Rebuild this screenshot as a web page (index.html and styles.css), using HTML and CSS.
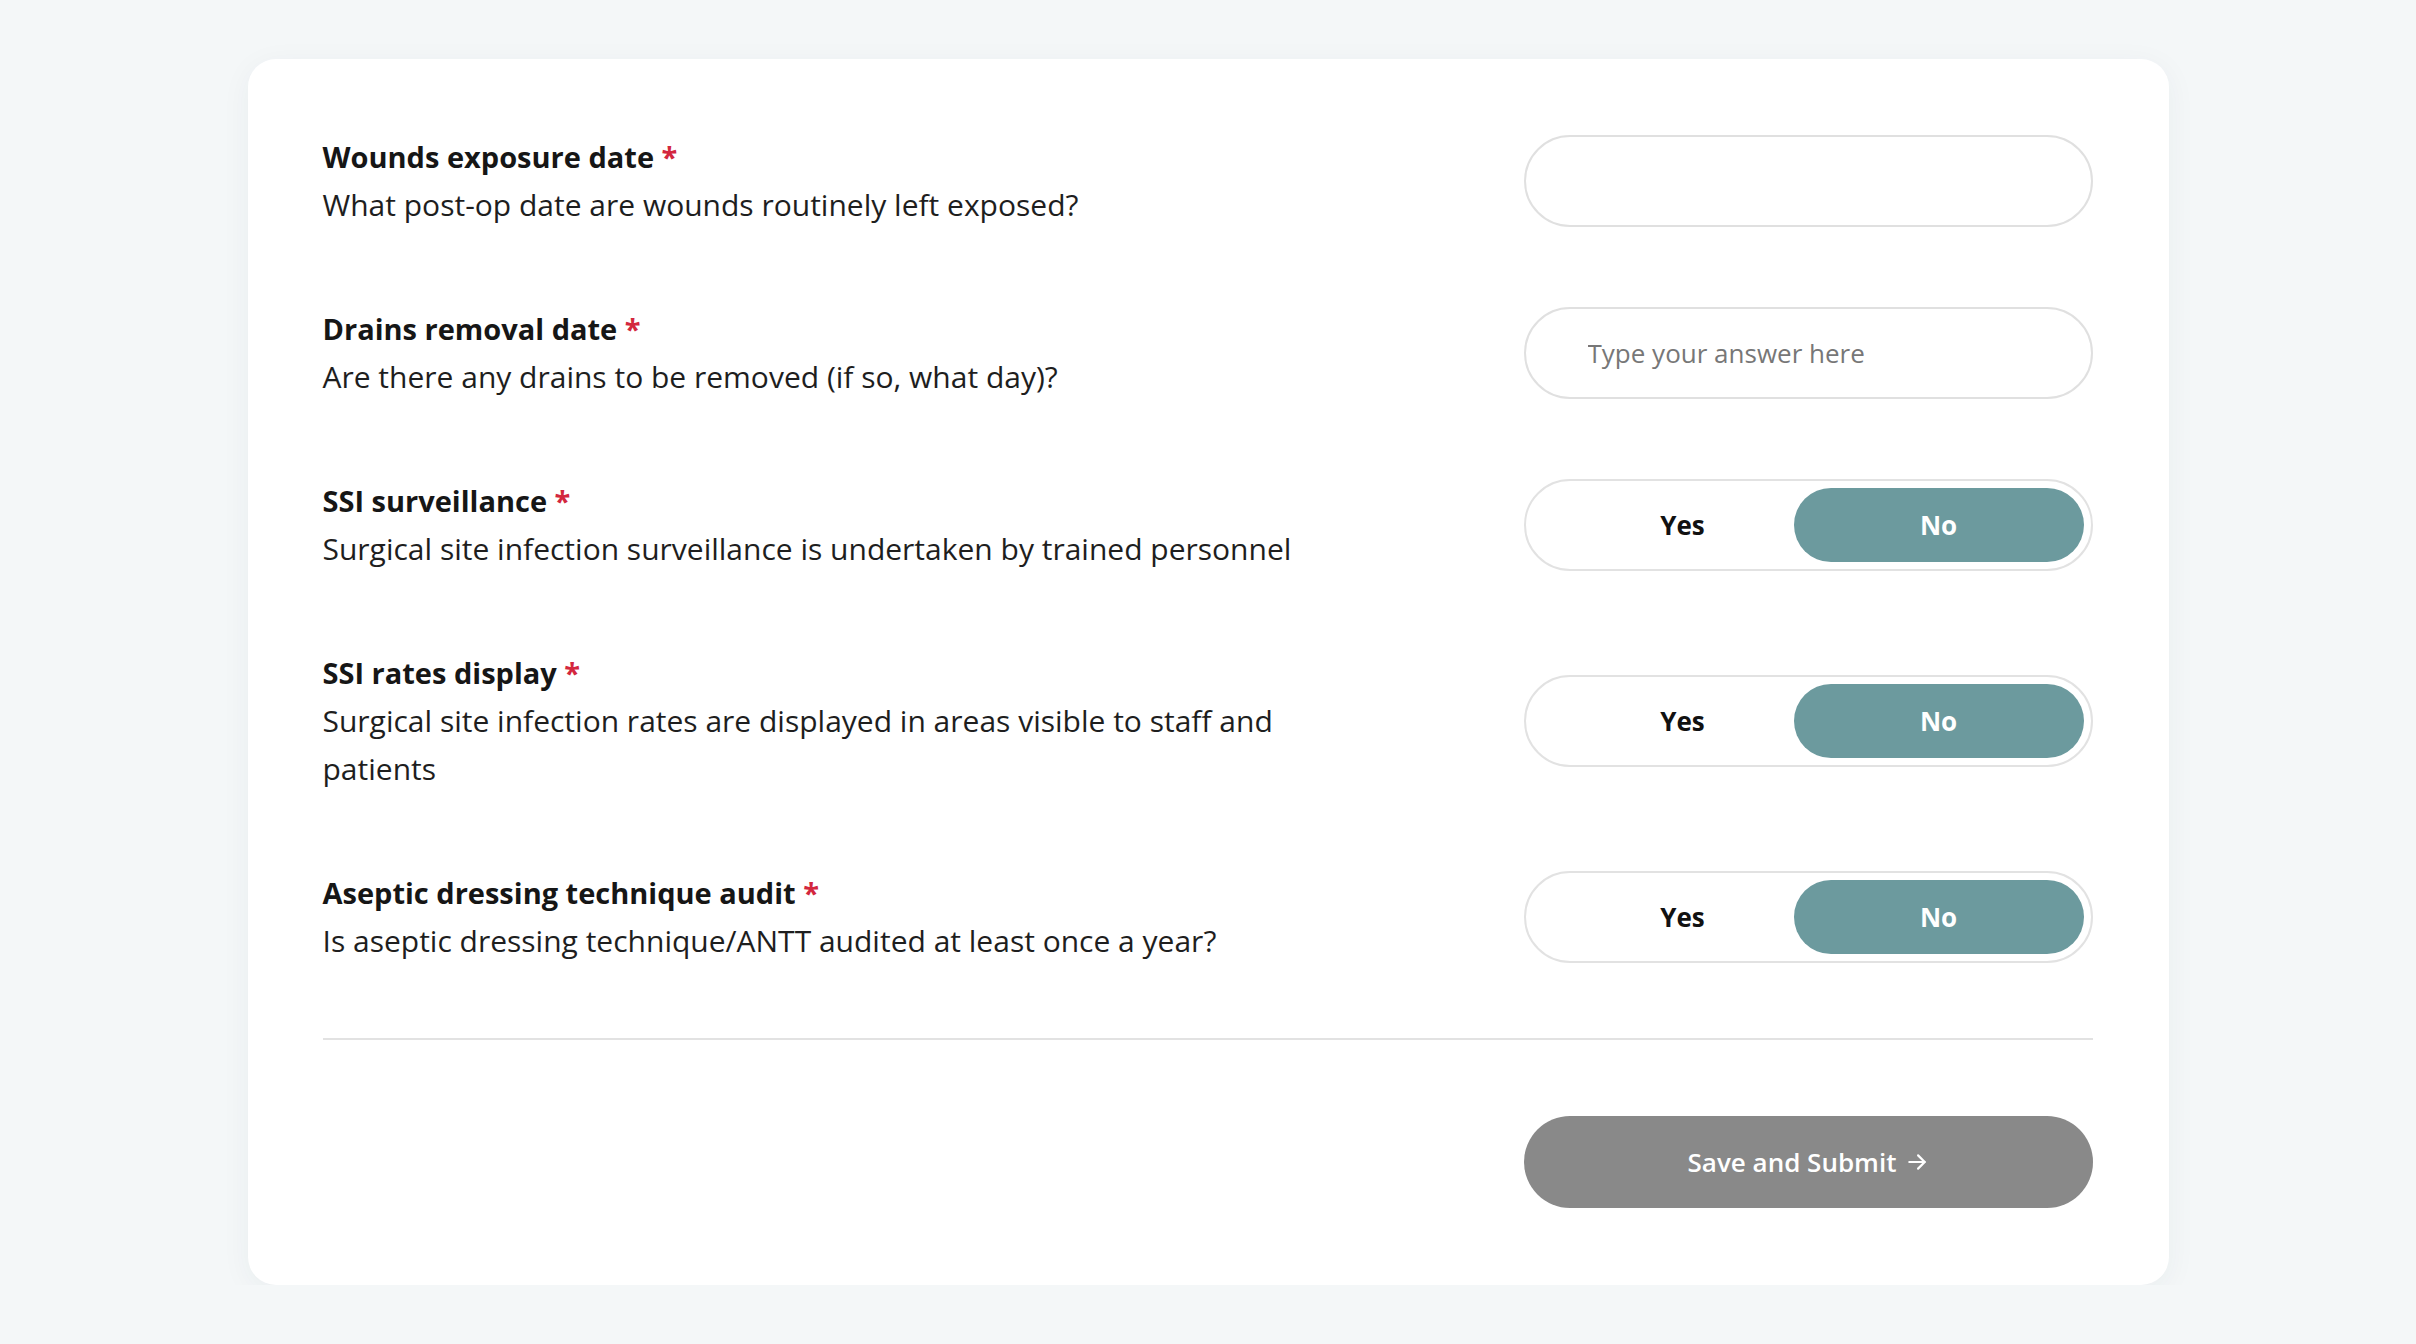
FILE: index.html
```html
<!DOCTYPE html>
<html lang="en">

<head>
    <meta charset="UTF-8">
    <meta name="viewport" content="width=device-width, initial-scale=1.0">
    <title>Surgical site audit</title>
    <link rel="stylesheet" href="styles.css">
</head>

<body>
    <form class="card" onsubmit="return false">
        <div class="question">
            <div class="question-text">
                <h3 class="question-title">Wounds exposure date <span class="required">*</span></h3>
                <p class="question-desc">What post-op date are wounds routinely left exposed?</p>
            </div>
            <input class="answer-input" type="text">
        </div>

        <div class="question">
            <div class="question-text">
                <h3 class="question-title">Drains removal date <span class="required">*</span></h3>
                <p class="question-desc">Are there any drains to be removed (if so, what day)?</p>
            </div>
            <input class="answer-input" type="text" placeholder="Type your answer here">
        </div>

        <div class="question">
            <div class="question-text">
                <h3 class="question-title">SSI surveillance <span class="required">*</span></h3>
                <p class="question-desc">Surgical site infection surveillance is undertaken by trained personnel</p>
            </div>
            <div class="toggle">
                <button type="button" class="toggle-option">Yes</button>
                <button type="button" class="toggle-option is-active">No</button>
            </div>
        </div>

        <div class="question">
            <div class="question-text">
                <h3 class="question-title">SSI rates display <span class="required">*</span></h3>
                <p class="question-desc">Surgical site infection rates are displayed in areas visible to staff and patients</p>
            </div>
            <div class="toggle">
                <button type="button" class="toggle-option">Yes</button>
                <button type="button" class="toggle-option is-active">No</button>
            </div>
        </div>

        <div class="question">
            <div class="question-text">
                <h3 class="question-title">Aseptic dressing technique audit <span class="required">*</span></h3>
                <p class="question-desc">Is aseptic dressing technique/ANTT audited at least once a year?</p>
            </div>
            <div class="toggle">
                <button type="button" class="toggle-option">Yes</button>
                <button type="button" class="toggle-option is-active">No</button>
            </div>
        </div>

        <hr class="divider">

        <div class="actions">
            <button type="submit" class="submit-btn">
                Save and Submit
                <svg width="22" height="22" viewBox="0 0 20 20" fill="none" stroke="currentColor" stroke-width="2"
                    stroke-linecap="round" stroke-linejoin="round">
                    <path d="M3 10h14" />
                    <path d="M11 4l6 6-6 6" />
                </svg>
            </button>
        </div>
    </form>

    <script>
        // chọn Yes / No trong từng nhóm
        document.querySelectorAll('.toggle').forEach(group => {
            group.querySelectorAll('.toggle-option').forEach(btn => {
                btn.addEventListener('click', () => {
                    group.querySelectorAll('.toggle-option').forEach(b => b.classList.remove('is-active'));
                    btn.classList.add('is-active');
                });
            });
        });
    </script>
</body>

</html>
```

FILE: styles.css
```css
* {
    margin: 0;
    padding: 0;
    box-sizing: border-box;
}

body {
    font-family: "Open Sans", "Lato", sans-serif;
    background-color: #f4f7f8;
    color: #1b1b1b;
}

.card {
    width: 1921px;
    margin: 59px auto 0;
    padding: 74px 76px 77px 75px;
    background: #fff;
    border-radius: 28px;
    box-shadow: 0 6px 30px rgba(40, 60, 70, 0.05);
    display: flex;
    flex-direction: column;
    gap: 76px;
}

.question {
    display: flex;
    align-items: center;
    justify-content: space-between;
    gap: 40px;
}

.question-text {
    max-width: 1040px;
    font-size: 30px;
    line-height: 48px;
}

.question-title {
    font-size: 29px;
    font-weight: 700;
    line-height: 48px;
    color: #161616;
}

.required {
    color: #d3273e;
}

.question-desc {
    color: #1e1e1e;
}

.answer-input {
    flex: 0 0 569px;
    width: 569px;
    height: 92px;
    padding: 0 62px;
    border: 2px solid #e0e0e0;
    border-radius: 46px;
    font-family: inherit;
    font-size: 26px;
    color: #1b1b1b;
    outline: none;
}

.answer-input::placeholder {
    color: #777;
}

.toggle {
    flex: 0 0 569px;
    height: 92px;
    padding: 7px;
    border: 2px solid #e2e2e2;
    border-radius: 46px;
    display: flex;
}

.toggle-option {
    flex: 1;
    padding-left: 39px;
    border: none;
    background: none;
    border-radius: 40px;
    font-family: inherit;
    font-size: 26px;
    font-weight: 700;
    color: #111;
    cursor: pointer;
}

.toggle-option.is-active {
    flex: 0 0 290px;
    padding-left: 0;
    background-color: #6c9a9e;
    color: #fff;
}

.divider {
    margin-top: -3px;
    border: none;
    border-top: 2px solid #e2e2e2;
}

.actions {
    display: flex;
    justify-content: flex-end;
}

.submit-btn {
    width: 569px;
    height: 92px;
    border: none;
    border-radius: 46px;
    background-color: #898989;
    color: #fff;
    font-family: inherit;
    font-size: 26px;
    font-weight: 600;
    display: flex;
    align-items: center;
    justify-content: center;
    gap: 10px;
    cursor: pointer;
}
```
